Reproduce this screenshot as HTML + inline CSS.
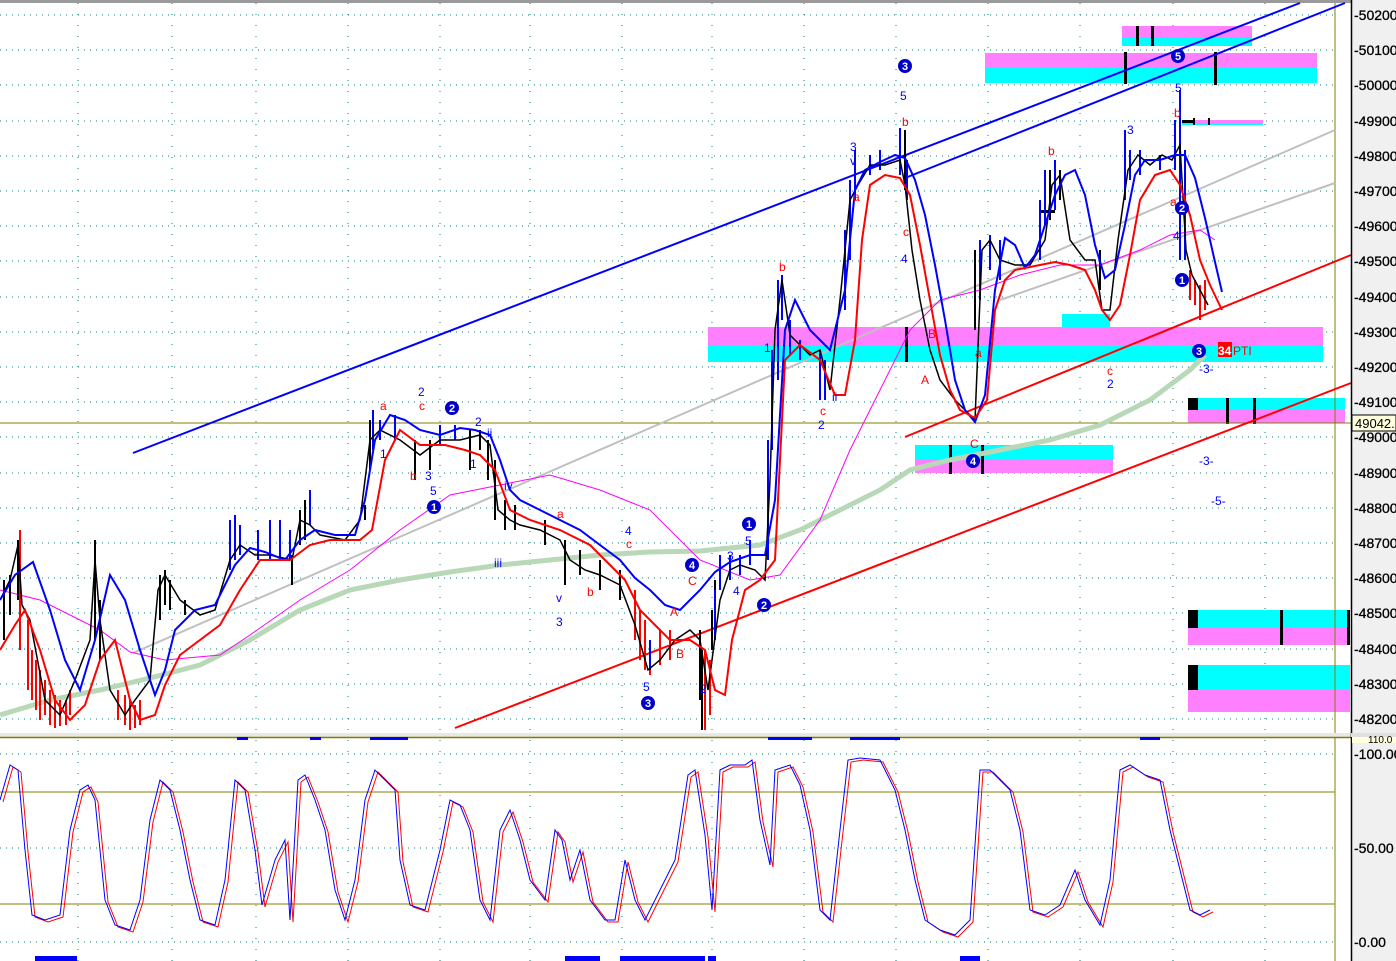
<!DOCTYPE html>
<html><head><meta charset="utf-8"><style>
html,body{margin:0;padding:0;background:#fff;overflow:hidden}
svg{display:block;font-family:"Liberation Sans",sans-serif}
</style></head><body>
<svg width="1396" height="961" viewBox="0 0 1396 961" xmlns="http://www.w3.org/2000/svg">
<rect width="1396" height="961" fill="#fff"/>
<rect x="0" y="0" width="1351" height="3" fill="#9a9a9a"/>
<g stroke="#008080" stroke-width="1" stroke-dasharray="1,5">
<line x1="0" y1="15" x2="1335" y2="15"/><line x1="0" y1="50" x2="1335" y2="50"/><line x1="0" y1="85" x2="1335" y2="85"/><line x1="0" y1="121" x2="1335" y2="121"/><line x1="0" y1="156" x2="1335" y2="156"/><line x1="0" y1="191" x2="1335" y2="191"/><line x1="0" y1="226" x2="1335" y2="226"/><line x1="0" y1="261" x2="1335" y2="261"/><line x1="0" y1="297" x2="1335" y2="297"/><line x1="0" y1="332" x2="1335" y2="332"/><line x1="0" y1="367" x2="1335" y2="367"/><line x1="0" y1="402" x2="1335" y2="402"/><line x1="0" y1="437" x2="1335" y2="437"/><line x1="0" y1="473" x2="1335" y2="473"/><line x1="0" y1="508" x2="1335" y2="508"/><line x1="0" y1="543" x2="1335" y2="543"/><line x1="0" y1="578" x2="1335" y2="578"/><line x1="0" y1="613" x2="1335" y2="613"/><line x1="0" y1="649" x2="1335" y2="649"/><line x1="0" y1="684" x2="1335" y2="684"/><line x1="0" y1="719" x2="1335" y2="719"/>
<line x1="0" y1="754" x2="1335" y2="754"/><line x1="0" y1="848" x2="1335" y2="848"/><line x1="0" y1="942" x2="1335" y2="942"/>
</g>
<g stroke="#008080" stroke-width="1" stroke-dasharray="1,10">
<line x1="78" y1="3" x2="78" y2="961"/><line x1="172" y1="3" x2="172" y2="961"/><line x1="256" y1="3" x2="256" y2="961"/><line x1="348" y1="3" x2="348" y2="961"/><line x1="440" y1="3" x2="440" y2="961"/><line x1="530" y1="3" x2="530" y2="961"/><line x1="622" y1="3" x2="622" y2="961"/><line x1="712" y1="3" x2="712" y2="961"/><line x1="804" y1="3" x2="804" y2="961"/><line x1="896" y1="3" x2="896" y2="961"/><line x1="988" y1="3" x2="988" y2="961"/><line x1="1080" y1="3" x2="1080" y2="961"/><line x1="1173" y1="3" x2="1173" y2="961"/><line x1="1265" y1="3" x2="1265" y2="961"/>
</g>
<rect x="708" y="327" width="615" height="19" fill="#ff80ff"/><rect x="708" y="346" width="615" height="16" fill="#00ffff"/>
<rect x="1062" y="314" width="48" height="13" fill="#00ffff"/>
<rect x="985" y="53" width="332" height="15" fill="#ff80ff"/><rect x="985" y="68" width="332" height="15" fill="#00ffff"/>
<rect x="1122" y="26" width="130" height="11" fill="#ff80ff"/><rect x="1122" y="37" width="130" height="9" fill="#00ffff"/>
<rect x="1182" y="120" width="81" height="3" fill="#ff80ff"/><rect x="1182" y="123" width="81" height="2" fill="#00ffff"/>
<rect x="915" y="445" width="198" height="15" fill="#00ffff"/><rect x="915" y="460" width="198" height="13" fill="#ff80ff"/>
<rect x="1188" y="398" width="157" height="12" fill="#00ffff"/><rect x="1188" y="410" width="157" height="13" fill="#ff80ff"/>
<rect x="1188" y="610" width="162" height="18" fill="#00ffff"/><rect x="1188" y="628" width="162" height="17" fill="#ff80ff"/>
<rect x="1188" y="665" width="162" height="25" fill="#00ffff"/><rect x="1188" y="690" width="162" height="22" fill="#ff80ff"/>
<g fill="#000"><rect x="1188" y="398" width="10" height="12"/><rect x="1188" y="610" width="10" height="18"/><rect x="1188" y="665" width="10" height="25"/>
<rect x="1226" y="398" width="3" height="26"/><rect x="1253" y="398" width="3" height="26"/><rect x="1280" y="610" width="3" height="35"/><rect x="1347" y="610" width="3" height="35"/>
<rect x="1124" y="52" width="3" height="32"/><rect x="1214" y="52" width="3" height="33"/><rect x="1136" y="26" width="3" height="20"/><rect x="1151" y="26" width="3" height="20"/><rect x="1182" y="120" width="12" height="3"/><rect x="1193" y="118" width="2" height="7"/><rect x="1208" y="118" width="2" height="7"/>
<rect x="949" y="445" width="3" height="29"/><rect x="981" y="445" width="3" height="29"/><rect x="905" y="327" width="3" height="35"/><rect x="1040" y="210" width="15" height="3"/></g>
<line x1="0" y1="423" x2="1351" y2="423" stroke="#808000" stroke-width="1"/>
<line x1="1335" y1="3" x2="1335" y2="961" stroke="#808000" stroke-width="1"/>
<line x1="0" y1="792" x2="1335" y2="792" stroke="#808000"/><line x1="0" y1="904" x2="1335" y2="904" stroke="#808000"/>
<line x1="133" y1="453" x2="1300" y2="3" stroke="#0000ff" stroke-width="2"/>
<line x1="905" y1="178" x2="1345" y2="3" stroke="#0000ff" stroke-width="2"/>
<line x1="133" y1="653" x2="1335" y2="130" stroke="#c0c0c0" stroke-width="2"/>
<line x1="1000" y1="300" x2="1335" y2="183" stroke="#c0c0c0" stroke-width="2"/>
<line x1="455" y1="728" x2="1351" y2="383" stroke="#ff0000" stroke-width="2"/>
<line x1="905" y1="437" x2="1351" y2="255" stroke="#ff0000" stroke-width="2"/>
<polyline fill="none" stroke="#b8d8b8" stroke-width="5" points="0,715 50,700 100,690 150,678 200,665 250,640 300,610 350,590 400,580 450,572 500,565 550,560 600,555 650,552 700,551 760,545 800,530 840,510 880,490 910,470 950,460 1000,450 1050,440 1100,425 1150,400 1190,370 1205,355"/>
<polyline fill="none" stroke="#ff00ff" stroke-width="1" points="0,590 40,600 80,620 100,630 130,652 165,660 220,655 250,635 300,600 350,570 400,530 450,495 500,485 550,475 600,490 650,510 700,560 750,580 780,575 820,520 850,450 880,390 910,330 940,300 980,290 1020,275 1060,265 1100,265 1140,250 1170,235 1200,230 1215,240"/>
<!-- candle bars -->
<path fill="none" stroke="#000" stroke-width="2" d="M4 580V640 M10 575V615 M18 540V600 M95 540V640 M100 600V660 M160 575V620 M165 570V605 M170 580V610 M185 600V615 M292 555V585 M300 510V545 M305 500V540 M365 505V520 M370 420V470 M415 440V480 M430 440V470 M470 430V470 M480 430V450 M488 440V480 M495 460V520 M505 500V530 M515 505V530 M545 520V545 M565 540V585 M580 550V575 M600 560V590 M620 570V600 M700 630V700 M702 650V730 M712 610V650 M715 580V620 M905 130V190 M975 250V330 M1050 170V220 M1060 170V200 M1100 250V290 M1130 150V180 M1180 130V200"/>
<path fill="none" stroke="#ff0000" stroke-width="2" d="M20 530V650 M28 620V690 M32 650V700 M36 660V710 M40 670V720 M45 680V715 M50 690V725 M55 695V728 M60 700V726 M66 700V725 M70 690V715 M118 690V720 M125 695V725 M130 700V730 M135 705V728 M140 700V725 M635 590V640 M640 610V660 M645 620V670 M650 640V675 M660 630V665 M670 630V660 M705 650V730 M710 660V715 M1190 270V300 M1195 280V305 M1200 285V320 M1205 280V310"/>
<path fill="none" stroke="#0000ff" stroke-width="2" d="M230 520V570 M235 515V560 M240 525V555 M258 530V560 M270 520V560 M280 520V560 M290 530V560 M310 490V525 M373 410V450 M380 420V440 M395 415V440 M440 425V445 M455 425V440 M650 640V670 M715 590V640 M720 555V590 M730 555V580 M740 555V575 M750 540V565 M768 440V560 M772 350V450 M778 280V380 M782 275V320 M790 320V355 M800 340V360 M820 350V400 M825 360V400 M845 230V310 M850 180V260 M855 150V200 M870 155V175 M880 150V170 M900 128V175 M907 160V200 M980 240V300 M990 235V270 M1000 240V280 M1040 200V260 M1045 170V225 M1055 160V210 M1125 130V200 M1130 150V180 M1140 150V175 M1160 155V170 M1175 120V170 M1180 90V260 M1185 150V260"/>
<polyline fill="none" stroke="#000" stroke-width="1.5" points="0,600 10,580 18,545 22,605 30,620 45,700 60,715 75,680 90,640 95,560 100,620 110,690 125,715 135,700 150,680 158,590 165,575 180,600 200,615 215,610 230,560 240,545 255,555 270,555 292,560 300,520 310,525 320,535 345,540 360,520 370,440 380,430 400,440 420,455 440,440 460,440 480,435 490,445 498,510 510,520 520,525 540,530 560,540 570,560 585,570 600,575 620,585 635,625 648,670 660,660 675,640 690,630 700,640 708,690 712,660 720,600 730,570 740,565 755,570 765,580 770,480 775,330 782,280 790,335 810,355 820,350 830,390 840,300 850,200 858,185 870,165 885,165 900,160 905,185 912,250 920,300 930,350 940,380 955,400 965,410 975,420 982,250 990,240 1000,260 1015,265 1030,265 1045,240 1052,185 1060,175 1070,240 1085,260 1095,260 1102,310 1110,310 1118,240 1128,170 1138,155 1150,165 1162,155 1172,160 1180,145 1186,250 1192,275 1200,290 1208,305"/>
<polyline fill="none" stroke="#0000ff" stroke-width="2" points="0,600 15,575 33,562 50,610 65,660 80,690 95,640 110,575 125,600 140,650 155,695 165,670 175,630 195,610 215,605 235,565 250,548 265,552 285,560 300,540 315,530 335,535 355,535 365,500 375,440 390,415 405,420 420,430 440,435 460,428 475,430 490,435 500,460 510,490 520,500 540,510 560,520 580,530 600,545 620,560 635,578 650,590 665,605 680,610 700,590 715,572 730,562 750,555 765,555 775,500 785,330 795,300 810,330 830,350 845,290 855,190 865,170 880,162 895,155 905,158 915,180 925,215 935,265 945,320 955,380 965,410 975,422 985,395 995,290 1005,238 1015,245 1025,268 1035,255 1045,225 1055,195 1065,175 1075,170 1085,195 1095,245 1105,278 1115,270 1125,225 1135,175 1145,160 1160,160 1175,155 1185,155 1195,178 1205,218 1215,262 1222,292"/>
<polyline fill="none" stroke="#ff0000" stroke-width="2" points="0,650 15,625 25,610 40,650 55,700 70,720 85,705 100,660 115,640 130,700 140,720 155,715 165,685 180,655 200,640 220,625 240,590 260,560 290,560 310,545 330,540 360,540 372,530 385,460 400,430 420,445 445,445 465,450 480,455 495,470 510,510 530,520 560,530 590,545 610,565 625,580 640,610 655,625 670,640 690,640 705,650 715,690 725,695 732,640 745,590 760,580 775,560 785,360 800,345 820,360 835,395 845,395 855,340 862,240 870,185 885,175 900,178 910,195 920,245 930,300 940,355 950,390 960,410 975,418 987,400 995,310 1005,280 1015,270 1025,268 1040,265 1055,262 1070,265 1085,270 1095,290 1102,310 1110,320 1120,305 1130,255 1140,200 1155,175 1170,170 1180,185 1190,215 1200,260 1210,285 1222,310"/>
<g font-size="12" fill="#ff0000">
<text x="380" y="410">a</text><text x="419" y="410">c</text><text x="410" y="480">b</text><text x="557" y="518">a</text><text x="587" y="596">b</text><text x="626" y="548">c</text><text x="670" y="616">A</text><text x="688" y="585">C</text><text x="676" y="658">B</text><text x="779" y="271">b</text><text x="853" y="201">a</text><text x="902" y="126">b</text><text x="903" y="236">c</text><text x="928" y="338">B</text><text x="921" y="384">A</text><text x="975" y="357">a</text><text x="970" y="448">C</text><text x="1048" y="155">b</text><text x="1107" y="375">c</text><text x="820" y="415">c</text><text x="1174" y="117">b</text><text x="1170" y="206">a</text>
</g>
<g font-size="12" fill="#0000ff">
<text x="418" y="396">2</text><text x="380" y="458">1</text><text x="425" y="480">3</text><text x="430" y="495">5</text><text x="475" y="426">2</text><text x="470" y="468">1</text><text x="487" y="437">ii</text><text x="504" y="490">iv</text><text x="494" y="567">iii</text><text x="556" y="602">v</text><text x="556" y="626">3</text><text x="625" y="535">4</text><text x="643" y="691">5</text><text x="700" y="693">2</text><text x="727" y="560">3</text><text x="745" y="545">5</text><text x="733" y="595">4</text><text x="764" y="352">1</text><text x="850" y="151">3</text><text x="850" y="165">v</text><text x="900" y="100">5</text><text x="901" y="263">4</text><text x="818" y="429">2</text><text x="832" y="401">ii</text><text x="1127" y="134">3</text><text x="1107" y="388">2</text><text x="1175" y="92">5</text><text x="1173" y="240">4</text><text x="1199" y="373">-3-</text><text x="1199" y="465">-3-</text><text x="1211" y="505">-5-</text>
</g>
<g font-size="11" font-weight="bold" text-anchor="middle">
<g fill="#0000c8"><circle cx="434" cy="507" r="7"/><circle cx="452" cy="408" r="7"/><circle cx="648" cy="703" r="7"/><circle cx="692" cy="565" r="7"/><circle cx="749" cy="524" r="7"/><circle cx="764" cy="605" r="7"/><circle cx="905" cy="66" r="7"/><circle cx="973" cy="461" r="7"/><circle cx="1178" cy="56" r="7"/><circle cx="1182" cy="208" r="7"/><circle cx="1182" cy="280" r="7"/><circle cx="1199" cy="351" r="7"/></g>
<g fill="#fff"><text x="434" y="511">1</text><text x="452" y="412">2</text><text x="648" y="707">3</text><text x="692" y="569">4</text><text x="749" y="528">1</text><text x="764" y="609">2</text><text x="905" y="70">3</text><text x="973" y="465">4</text><text x="1178" y="60">5</text><text x="1182" y="212">2</text><text x="1182" y="284">1</text><text x="1199" y="355">3</text></g>
</g>
<rect x="1218" y="342" width="14" height="15" fill="#ff0000"/>
<text x="1218" y="355" font-size="12" font-weight="bold" fill="#fff">34</text>
<text x="1233" y="355" font-size="12" fill="#ff0000">PTI</text>
<rect x="0" y="733" width="1396" height="4" fill="#e8e8e8"/>
<line x1="0" y1="737.5" x2="1351" y2="737.5" stroke="#808000" stroke-width="1.5"/>
<g fill="#0000ff"><rect x="237" y="737" width="11" height="3"/><rect x="310" y="737" width="11" height="3"/><rect x="370" y="737" width="38" height="3"/><rect x="768" y="737" width="44" height="3"/><rect x="850" y="737" width="50" height="3"/><rect x="1140" y="737" width="20" height="3"/>
<rect x="35" y="956" width="42" height="5"/><rect x="565" y="956" width="35" height="5"/><rect x="620" y="956" width="85" height="5"/><rect x="708" y="956" width="8" height="5"/><rect x="960" y="956" width="20" height="5"/></g>
<polyline fill="none" stroke="#ff0000" stroke-width="1" transform="translate(3,2)" points="0,800 10,765 18,770 25,850 32,915 45,920 60,915 70,830 80,790 88,785 95,800 105,900 115,925 130,930 140,900 150,820 160,780 170,790 180,830 190,880 200,920 215,925 225,880 235,780 245,790 255,850 262,905 275,860 285,840 290,920 298,780 305,775 315,800 325,830 335,890 345,920 355,880 365,800 375,770 385,780 395,790 400,860 410,905 425,910 440,850 450,800 460,805 470,830 480,900 490,920 500,830 510,810 520,840 530,880 545,900 555,830 562,840 570,880 580,850 590,900 605,920 615,920 625,860 635,900 645,920 660,890 675,860 688,775 695,770 705,835 712,910 720,770 730,765 745,765 752,760 760,820 770,865 775,770 790,765 800,785 810,830 820,910 830,920 840,830 848,760 860,758 880,760 895,790 905,830 915,880 925,920 940,930 955,935 970,920 980,770 990,770 1000,780 1010,790 1020,830 1030,910 1045,915 1060,905 1075,870 1085,900 1100,925 1110,880 1120,770 1130,765 1145,775 1160,780 1170,830 1180,870 1190,910 1200,915 1210,910"/>
<polyline fill="none" stroke="#0000ff" stroke-width="1" points="0,800 10,765 18,770 25,850 32,915 45,920 60,915 70,830 80,790 88,785 95,800 105,900 115,925 130,930 140,900 150,820 160,780 170,790 180,830 190,880 200,920 215,925 225,880 235,780 245,790 255,850 262,905 275,860 285,840 290,920 298,780 305,775 315,800 325,830 335,890 345,920 355,880 365,800 375,770 385,780 395,790 400,860 410,905 425,910 440,850 450,800 460,805 470,830 480,900 490,920 500,830 510,810 520,840 530,880 545,900 555,830 562,840 570,880 580,850 590,900 605,920 615,920 625,860 635,900 645,920 660,890 675,860 688,775 695,770 705,835 712,910 720,770 730,765 745,765 752,760 760,820 770,865 775,770 790,765 800,785 810,830 820,910 830,920 840,830 848,760 860,758 880,760 895,790 905,830 915,880 925,920 940,930 955,935 970,920 980,770 990,770 1000,780 1010,790 1020,830 1030,910 1045,915 1060,905 1075,870 1085,900 1100,925 1110,880 1120,770 1130,765 1145,775 1160,780 1170,830 1180,870 1190,910 1200,915 1210,910"/>
<rect x="1351" y="0" width="45" height="961" fill="#f0f0f0"/>
<line x1="1351.5" y1="0" x2="1351.5" y2="961" stroke="#000" stroke-width="1.5"/>
<rect x="1351" y="733" width="45" height="4" fill="#e0e0e0"/>
<g font-size="14" fill="#000" stroke="#000" stroke-width="0.3">
<text x="1354" y="20">-50200</text><text x="1354" y="55">-50100</text><text x="1354" y="90">-50000</text><text x="1354" y="126">-49900</text><text x="1354" y="161">-49800</text><text x="1354" y="196">-49700</text><text x="1354" y="231">-49600</text><text x="1354" y="266">-49500</text><text x="1354" y="302">-49400</text><text x="1354" y="337">-49300</text><text x="1354" y="372">-49200</text><text x="1354" y="407">-49100</text><text x="1354" y="442">-49000</text><text x="1354" y="478">-48900</text><text x="1354" y="513">-48800</text><text x="1354" y="548">-48700</text><text x="1354" y="583">-48600</text><text x="1354" y="618">-48500</text><text x="1354" y="654">-48400</text><text x="1354" y="689">-48300</text><text x="1354" y="724">-48200</text>
<text x="1354" y="759">-100.00</text><text x="1354" y="853">-50.00</text><text x="1354" y="947">-0.00</text>
</g>
<rect x="1352" y="415" width="44" height="16" fill="#ffffe0" stroke="#000"/>
<text x="1355" y="428" font-size="13" fill="#000">49042.</text>
<rect x="1352" y="737" width="44" height="6" fill="#ffffe0"/>
<text x="1368" y="743" font-size="10" fill="#000">110.0</text>
</svg>
</body></html>
